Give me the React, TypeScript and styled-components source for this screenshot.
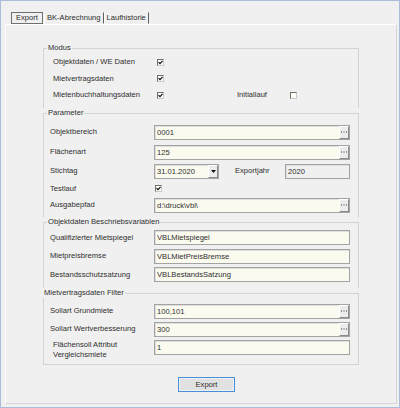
import React from "react";
import styled, { createGlobalStyle } from "styled-components";

const LINE = "#d3d3d3";

const GlobalStyle = createGlobalStyle`
  html, body {
    margin: 0;
    padding: 0;
    background: #f0f0f0;
  }
  body {
    font-family: "Liberation Sans", Arial, sans-serif;
    font-size: 7.6px;
    color: #2e2e2e;
  }
`;

const Window = styled.div`
  width: 400px;
  height: 408px;
  box-sizing: border-box;
  border: 1px solid #a9bedb;
  background: #f0f0f0;
  display: flex;
  flex-direction: column;
`;

const TabStrip = styled.div`
  display: flex;
  height: 12px;
  margin-top: 11px;
  padding-left: 10px;
`;

const Tab = styled.div<{ $active?: boolean }>`
  box-sizing: border-box;
  height: 12px;
  line-height: 10px;
  white-space: nowrap;
  border: 1px solid transparent;
  padding: 0 ${(p) => (p.$active ? 4 : 2)}px;
  ${(p) =>
    p.$active
      ? `border-color: #6f6f6f; margin-right: 1px;`
      : `border-left-color: #ffffff; border-right-color: #5e5e5e;`}
`;

const Panel = styled.div`
  flex: 1;
  margin: 0 2px 3px 4px;
  border-top: 1px solid #ffffff;
  border-left: 1px solid #ffffff;
  border-right: 1px solid #d6d6d6;
  border-bottom: 1px solid #d6d6d6;
  display: flex;
  flex-direction: column;
`;

const Frame = styled.div`
  width: 316px;
  margin: 18px 0 0 37px;
  display: flex;
  flex-direction: column;
`;

const SectionHeader = styled.div`
  display: flex;
  height: 10px;
  line-height: 10px;

  &::before {
    content: "";
    width: 3px;
    margin-top: 5px;
    border-top: 1px solid ${LINE};
    border-left: 1px solid ${LINE};
  }

  &::after {
    content: "";
    flex: 1;
    margin-top: 5px;
    border-top: 1px solid ${LINE};
    border-right: 1px solid ${LINE};
  }
`;

const SectionTitle = styled.span<{ $shift?: number }>`
  padding: 0 1px;
  background: #f0f0f0;
  white-space: nowrap;
  margin-left: ${(p) => p.$shift ?? 0}px;
`;

const SectionBody = styled.div<{ $pt: number; $pb: number; $last?: boolean }>`
  display: flex;
  flex-direction: column;
  padding: ${(p) => p.$pt}px 0 ${(p) => p.$pb}px 6px;
  border-left: 1px solid ${LINE};
  border-right: 1px solid ${LINE};
  ${(p) => (p.$last ? `border-bottom: 1px solid ${LINE};` : "")}
`;

const Row = styled.div<{ $h: number }>`
  display: flex;
  align-items: center;
  height: ${(p) => p.$h}px;
`;

const Label = styled.div<{ $indent?: number; $width?: number; $gap?: number; $pt?: number }>`
  box-sizing: border-box;
  flex: none;
  width: ${(p) => p.$width ?? 104}px;
  margin-left: ${(p) => p.$gap ?? 0}px;
  padding-left: ${(p) => p.$indent ?? 0}px;
  padding-top: ${(p) => p.$pt ?? 0}px;
  line-height: 10px;
  white-space: nowrap;
`;

const Field = styled.div<{ $width: number; $disabled?: boolean }>`
  box-sizing: border-box;
  flex: none;
  width: ${(p) => p.$width}px;
  height: 15px;
  display: flex;
  align-items: center;
  padding-left: 2px;
  border: 1px solid #a3a3a3;
  box-shadow: inset 1px 1px 0 #dedede;
  background: ${(p) => (p.$disabled ? "#f0f0f0" : "#fafaef")};
`;

const FieldText = styled.span`
  flex: 1;
  white-space: nowrap;
  overflow: hidden;
`;

const SideButton = styled.div`
  box-sizing: border-box;
  flex: none;
  width: 10px;
  height: 13px;
  display: flex;
  align-items: center;
  justify-content: center;
  background: #ececec;
  border-top: 1px solid #ffffff;
  border-left: 1px solid #ffffff;
  border-right: 1px solid #8c8c8c;
  border-bottom: 1px solid #8c8c8c;
`;

const Box = styled.div<{ $gap?: number }>`
  box-sizing: border-box;
  flex: none;
  width: 7px;
  height: 7px;
  margin-left: ${(p) => p.$gap ?? 0}px;
  border: 1px solid #6f6f6f;
  border-right-color: #c9c9c9;
  border-bottom-color: #c9c9c9;
  background: #fdfdf6;
  display: flex;
  align-items: center;
  justify-content: center;
`;

const Footer = styled.div`
  margin-top: 12px;
  padding-left: 172px;
`;

const Button = styled.button`
  box-sizing: border-box;
  width: 57px;
  height: 15px;
  padding: 0;
  font: inherit;
  color: #2e2e2e;
  background: #e1e1e1;
  border: 1px solid #4a8fd6;
  box-shadow: inset 0 0 0 1px #edf2f7;
`;

const CheckBox = ({ checked, gap }: { checked?: boolean; gap?: number }) => (
  <Box $gap={gap}>
    {checked && (
      <svg width="5" height="5" viewBox="0 0 5 5">
        <path d="M0.5 2.2 L2 3.7 L4.6 0.8" fill="none" stroke="#111" strokeWidth="1.2" />
      </svg>
    )}
  </Box>
);

const TextField = ({
  value,
  width = 196,
  ellipsis,
  dropdown,
  disabled,
}: {
  value: string;
  width?: number;
  ellipsis?: boolean;
  dropdown?: boolean;
  disabled?: boolean;
}) => (
  <Field $width={width} $disabled={disabled}>
    <FieldText>{value}</FieldText>
    {ellipsis && (
      <SideButton>
        <svg width="6" height="2" viewBox="0 0 6 2">
          <rect x="0" y="0.5" width="1" height="1" fill="#333" />
          <rect x="2.5" y="0.5" width="1" height="1" fill="#333" />
          <rect x="5" y="0.5" width="1" height="1" fill="#333" />
        </svg>
      </SideButton>
    )}
    {dropdown && (
      <SideButton>
        <svg width="5" height="3" viewBox="0 0 5 3">
          <polygon points="0,0 5,0 2.5,3" fill="#111" />
        </svg>
      </SideButton>
    )}
  </Field>
);

export default function App() {
  return (
    <>
      <GlobalStyle />
      <Window>
        <TabStrip>
          <Tab $active>Export</Tab>
          <Tab>BK-Abrechnung</Tab>
          <Tab>Laufhistorie</Tab>
        </TabStrip>
        <Panel>
          <Frame>
            <SectionHeader>
              <SectionTitle>Modus</SectionTitle>
            </SectionHeader>
            <SectionBody $pt={1} $pb={4.5}>
              <Row $h={16.5}>
                <Label $indent={3}>Objektdaten / WE Daten</Label>
                <CheckBox checked gap={3} />
              </Row>
              <Row $h={16.5}>
                <Label $indent={3}>Mietvertragsdaten</Label>
                <CheckBox checked gap={3} />
              </Row>
              <Row $h={16.5}>
                <Label $indent={3}>Mietenbuchhaltungsdaten</Label>
                <CheckBox checked gap={3} />
                <Label $gap={73} $width={53}>
                  Initiallauf
                </Label>
                <CheckBox />
              </Row>
            </SectionBody>

            <SectionHeader>
              <SectionTitle>Parameter</SectionTitle>
            </SectionHeader>
            <SectionBody $pt={4} $pb={4}>
              <Row $h={20}>
                <Label>Objektbereich</Label>
                <TextField value="0001" ellipsis />
              </Row>
              <Row $h={20}>
                <Label>Flächenart</Label>
                <TextField value="125" ellipsis />
              </Row>
              <Row $h={18}>
                <Label>Stichtag</Label>
                <TextField value="31.01.2020" width={65} dropdown />
                <Label $gap={16} $width={50}>
                  Exportjahr
                </Label>
                <TextField value="2020" width={65} disabled />
              </Row>
              <Row $h={17}>
                <Label>Testlauf</Label>
                <CheckBox checked gap={1} />
              </Row>
              <Row $h={16}>
                <Label>Ausgabepfad</Label>
                <TextField value="d:\druck\vbl\" ellipsis />
              </Row>
            </SectionBody>

            <SectionHeader>
              <SectionTitle>Objektdaten Beschriebsvariablen</SectionTitle>
            </SectionHeader>
            <SectionBody $pt={1.25} $pb={4.25}>
              <Row $h={18.5}>
                <Label>Qualifizierter Mietspiegel</Label>
                <TextField value="VBLMietspiegel" />
              </Row>
              <Row $h={18.5}>
                <Label>Mietpreisbremse</Label>
                <TextField value="VBLMietPreisBremse" />
              </Row>
              <Row $h={18.5}>
                <Label>Bestandsschutzsatzung</Label>
                <TextField value="VBLBestandsSatzung" />
              </Row>
            </SectionBody>

            <SectionHeader>
              <SectionTitle $shift={-4}>Mietvertragsdaten Filter</SectionTitle>
            </SectionHeader>
            <SectionBody $pt={4} $pb={8} $last>
              <Row $h={18}>
                <Label>Sollart Grundmiete</Label>
                <TextField value="100,101" ellipsis />
              </Row>
              <Row $h={18}>
                <Label>Sollart Wertverbesserung</Label>
                <TextField value="300" ellipsis />
              </Row>
              <Row $h={18}>
                <Label $indent={3} $pt={6}>
                  Flächensoll Attribut
                  <br />
                  Vergleichsmiete
                </Label>
                <TextField value="1" />
              </Row>
            </SectionBody>
          </Frame>
          <Footer>
            <Button>Export</Button>
          </Footer>
        </Panel>
      </Window>
    </>
  );
}
